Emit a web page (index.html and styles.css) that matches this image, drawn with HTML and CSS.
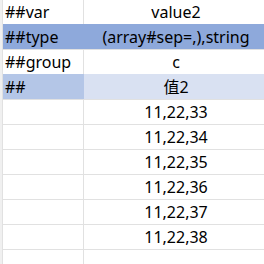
FILE: index.html
```html
<!DOCTYPE html>
<html>
<head>
<meta charset="utf-8">
<link rel="stylesheet" href="styles.css">
</head>
<body>
<div class="frame">
<div class="sheet">
  <div class="row first"><div class="cell a">##var</div><div class="cell b">value2</div></div>
  <div class="row type"><div class="cell a">##type</div><div class="cell b">(array#sep=,),string</div></div>
  <div class="row"><div class="cell a">##group</div><div class="cell b">c</div></div>
  <div class="row desc"><div class="cell a">##</div><div class="cell b">值2</div></div>
  <div class="row"><div class="cell a"></div><div class="cell b">11,22,33</div></div>
  <div class="row"><div class="cell a"></div><div class="cell b">11,22,34</div></div>
  <div class="row"><div class="cell a"></div><div class="cell b">11,22,35</div></div>
  <div class="row"><div class="cell a"></div><div class="cell b">11,22,36</div></div>
  <div class="row"><div class="cell a"></div><div class="cell b">11,22,37</div></div>
  <div class="row"><div class="cell a"></div><div class="cell b">11,22,38</div></div>
  <div class="row"><div class="cell a"></div><div class="cell b"></div></div>
</div>
</div>
</body>
</html>
```
FILE: styles.css
```css
html, body {
  margin: 0;
  padding: 0;
  background: #ffffff;
  overflow: hidden;
  width: 264px;
  height: 264px;
}
.frame {
  border-left: 2px solid #f0f0f0;
  width: 267px;
}
.sheet {
  width: 266px;
  border-left: 1px solid #e1e1e1;
  font-family: "Noto Sans", "Noto Sans CJK SC", sans-serif;
  font-size: 16px;
  color: #000000;
}
.row {
  display: flex;
  height: 25px;
}
.row.first {
  height: 24px;
}
.cell {
  box-sizing: border-box;
  border-top: 1px solid #e1e1e1;
  display: flex;
  align-items: center;
  white-space: nowrap;
  line-height: 1;
}
.row.first .cell {
  border-top: none;
}
.cell.a {
  width: 81px;
  flex: none;
  padding-left: 2px;
  border-right: 1px solid #e1e1e1;
}
.cell.b {
  width: 184px;
  flex: none;
  justify-content: center;
}
.row.type .cell {
  background: #8ea9db;
  border-color: #8ea9db;
}
.row.desc .cell.a {
  background: #b4c6e7;
  border-color: #b4c6e7;
}
.row.desc .cell.b {
  background: #d9e1f2;
  border-color: #d9e1f2;
}
```
